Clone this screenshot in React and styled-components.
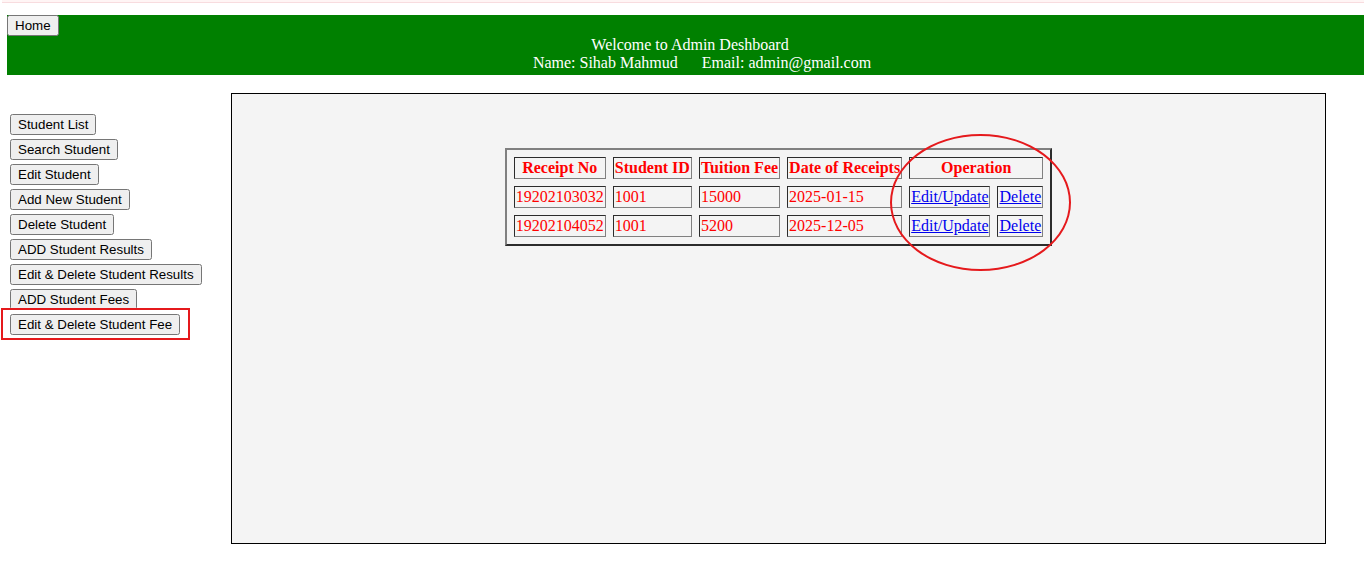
import React from "react";
import styled, { createGlobalStyle } from "styled-components";

const GlobalStyle = createGlobalStyle`
  body {
    margin: 0;
    background: #fff;
    font-family: "Liberation Serif", "Times New Roman", serif;
    font-size: 16px;
    line-height: 18px;
    overflow-x: hidden;
  }
`;

const NoticeStrip = styled.div`
  box-sizing: border-box;
  height: 3px;
  margin-left: 2px;
  background: #fff5f5;
  border-bottom: 1px solid #f8dcdf;
`;

const Page = styled.div`
  padding: 12px 0 0 7px;
`;

const Header = styled.header`
  display: flex;
  flex-direction: column;
  align-items: flex-start;
  background: green;
  color: #fff;
`;

const Button = styled.button`
  font-family: "Liberation Sans", Arial, sans-serif;
  color: #000;
  margin: 0;
`;

const Welcome = styled.div`
  align-self: stretch;
  box-sizing: border-box;
  padding-left: 9px;
  padding-bottom: 3px;
  text-align: center;
`;

const Identity = styled.div`
  display: flex;
  justify-content: center;
  gap: 24px;
  padding-left: 24px;
`;

const Body = styled.div`
  display: flex;
  margin: 18px 38px 0 0;
`;

const Sidebar = styled.nav`
  flex: 0 0 221px;
  display: flex;
  flex-direction: column;
  align-items: flex-start;
  gap: 4px;
  padding: 21px 0 0 3px;
`;

const Marked = styled.div`
  position: relative;
  display: flex;
`;

const BoxMark = styled.span`
  position: absolute;
  inset: -6px -10px -5px -9px;
  border: 2px solid #e5191c;
  pointer-events: none;
`;

const Panel = styled.main`
  box-sizing: border-box;
  flex: 1;
  min-height: 451px;
  padding-top: 54px;
  display: flex;
  justify-content: center;
  align-items: flex-start;
  background: #f4f4f4;
  border: 1px solid #000;
`;

const TableWrap = styled.div`
  position: relative;
`;

const Table = styled.table`
  border: 2px outset gray;
  border-spacing: 7px;
  color: red;
  white-space: nowrap;
`;

const HeadCell = styled.th`
  border: 1px inset gray;
  padding: 1px;
`;

const Cell = styled.td`
  border: 1px inset gray;
  padding: 1px;
`;

const Link = styled.a`
  color: #0000ee;
`;

const EllipseMark = styled.span`
  position: absolute;
  box-sizing: border-box;
  top: -14px;
  right: -19px;
  width: 181px;
  height: 137px;
  border: 2px solid #e5191c;
  border-radius: 50%;
  pointer-events: none;
`;

const menu = [
  { label: "Student List" },
  { label: "Search Student" },
  { label: "Edit Student" },
  { label: "Add New Student" },
  { label: "Delete Student" },
  { label: "ADD Student Results" },
  { label: "Edit & Delete Student Results" },
  { label: "ADD Student Fees" },
  { label: "Edit & Delete Student Fee", marked: true },
];

const receipts = [
  { no: "19202103032", student: "1001", fee: "15000", date: "2025-01-15" },
  { no: "19202104052", student: "1001", fee: "5200", date: "2025-12-05" },
];

export default function App() {
  return (
    <>
      <GlobalStyle />
      <NoticeStrip />
      <Page>
        <Header>
          <Button type="button">Home</Button>
          <Welcome>
            Welcome to Admin Deshboard
            <Identity>
              <span>Name: Sihab Mahmud</span>
              <span>Email: admin@gmail.com</span>
            </Identity>
          </Welcome>
        </Header>
        <Body>
          <Sidebar>
            {menu.map((item) => (
              <Marked key={item.label}>
                <Button type="button">{item.label}</Button>
                {item.marked && <BoxMark />}
              </Marked>
            ))}
          </Sidebar>
          <Panel>
            <TableWrap>
              <Table>
                <thead>
                  <tr>
                    <HeadCell>Receipt No</HeadCell>
                    <HeadCell>Student ID</HeadCell>
                    <HeadCell>Tuition Fee</HeadCell>
                    <HeadCell>Date of Receipts</HeadCell>
                    <HeadCell colSpan={2}>Operation</HeadCell>
                  </tr>
                </thead>
                <tbody>
                  {receipts.map((r) => (
                    <tr key={r.no}>
                      <Cell>{r.no}</Cell>
                      <Cell>{r.student}</Cell>
                      <Cell>{r.fee}</Cell>
                      <Cell>{r.date}</Cell>
                      <Cell><Link href="#edit">Edit/Update</Link></Cell>
                      <Cell><Link href="#delete">Delete</Link></Cell>
                    </tr>
                  ))}
                </tbody>
              </Table>
              <EllipseMark />
            </TableWrap>
          </Panel>
        </Body>
      </Page>
    </>
  );
}
